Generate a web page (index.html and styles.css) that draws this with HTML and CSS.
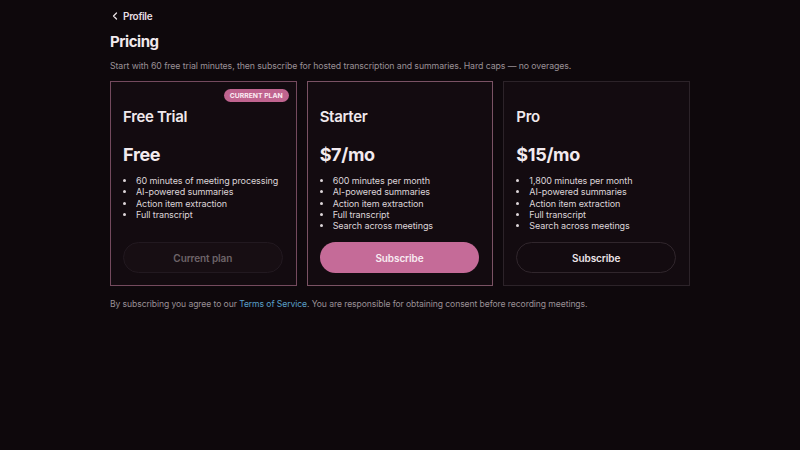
FILE: index.html
```html
<!DOCTYPE html>
<html lang="en">
<head>
<meta charset="utf-8">
<title>Pricing</title>
<link rel="stylesheet" href="styles.css">
</head>
<body>
<main class="page">
  <a class="back" href="#">
    <svg class="chev" width="8" height="8" viewBox="0 0 8 8"><path d="M5.5 1 L2.5 4 L5.5 7" fill="none" stroke="currentColor" stroke-width="1.3" stroke-linecap="round" stroke-linejoin="round"/></svg>
    <span>Profile</span>
  </a>
  <h1 class="title">Pricing</h1>
  <p class="subtitle">Start with 60 free trial minutes, then subscribe for hosted transcription and summaries. Hard caps — no overages.</p>

  <section class="plans">
    <div class="card card-current">
      <span class="badge">CURRENT PLAN</span>
      <h2 class="plan-name">Free Trial</h2>
      <div class="price">Free</div>
      <ul class="features">
        <li>60 minutes of meeting processing</li>
        <li>AI-powered summaries</li>
        <li>Action item extraction</li>
        <li>Full transcript</li>
      </ul>
      <button class="btn btn-disabled">Current plan</button>
    </div>
    <div class="card card-featured">
      <h2 class="plan-name">Starter</h2>
      <div class="price">$7/mo</div>
      <ul class="features">
        <li>600 minutes per month</li>
        <li>AI-powered summaries</li>
        <li>Action item extraction</li>
        <li>Full transcript</li>
        <li>Search across meetings</li>
      </ul>
      <button class="btn btn-primary">Subscribe</button>
    </div>
    <div class="card">
      <h2 class="plan-name">Pro</h2>
      <div class="price">$15/mo</div>
      <ul class="features">
        <li>1,800 minutes per month</li>
        <li>AI-powered summaries</li>
        <li>Action item extraction</li>
        <li>Full transcript</li>
        <li>Search across meetings</li>
      </ul>
      <button class="btn btn-outline">Subscribe</button>
    </div>
  </section>

  <p class="footer">By subscribing you agree to our <a href="#" class="link">Terms of Service</a>. You are responsible for obtaining consent before recording meetings.</p>
</main>
</body>
</html>
```

FILE: styles.css
```css
* { box-sizing: border-box; }
html, body {
  margin: 0;
  background: #0e080c;
  color: #efe7eb;
  font-family: Inter, "Noto Sans", sans-serif;
  letter-spacing: -0.02em;
}
.page {
  width: 580px;
  margin-left: 110px;
  padding-top: 9px;
}
.back {
  display: flex;
  align-items: center;
  gap: 4px;
  height: 14px;
  color: #e6dee2;
  text-decoration: none;
  font-size: 10px;
  font-weight: 600;
  letter-spacing: -0.03em;
  padding-left: 1px;
}
.chev { display: block; }
.title {
  margin: 9px 0 0;
  font-size: 15px;
  line-height: 20px;
  font-weight: 700;
  letter-spacing: -0.03em;
  color: #f1e9ed;
}
.subtitle {
  margin: 8px 0 0;
  font-size: 8.75px;
  line-height: 12px;
  letter-spacing: -0.01em;
  color: #9a9096;
}
.plans {
  margin-top: 9px;
  display: grid;
  grid-template-columns: repeat(3, 1fr);
  gap: 10px;
}
.card {
  position: relative;
  display: flex;
  flex-direction: column;
  background: #130b10;
  border: 1px solid #2c2329;
  padding: 25px 13px 12px 12px;
}
.card-current { border-color: #744a5e; }
.card-featured { border-color: #7a5264; }
.badge {
  position: absolute;
  top: 7px;
  right: 7px;
  height: 13px;
  line-height: 13px;
  padding: 0 6px;
  border-radius: 7px;
  background: #c0648f;
  color: #fbeaf2;
  font-size: 6.8px;
  font-weight: 700;
  letter-spacing: 0;
}
.plan-name {
  margin: 0;
  font-size: 15px;
  line-height: 20px;
  font-weight: 600;
  color: #f0e8ec;
}
.price {
  margin-top: 16px;
  font-size: 18px;
  line-height: 24px;
  font-weight: 700;
  color: #f2eaee;
}
.features {
  flex: 1;
  margin: 8px 0 0;
  padding-left: 13px;
  font-size: 9px;
  line-height: 11.25px;
  letter-spacing: -0.01em;
  color: #ddd5d9;
}
.btn {
  margin-top: 11px;
  height: 31px;
  border-radius: 16px;
  font-family: inherit;
  font-size: 10px;
  font-weight: 600;
  letter-spacing: -0.01em;
  border: 1px solid transparent;
}
.btn-disabled {
  background: #170e13;
  border-color: #221920;
  color: #6e6469;
}
.btn-primary {
  background: #c56b98;
  color: #f8ecf2;
}
.btn-outline {
  background: transparent;
  border-color: #30262c;
  color: #ece4e8;
}
.footer {
  margin: 12px 0 0;
  font-size: 8.6px;
  line-height: 12px;
  letter-spacing: -0.01em;
  color: #9a9096;
  white-space: nowrap;
}
.link {
  color: #5aa0c8;
  text-decoration: none;
}
```
